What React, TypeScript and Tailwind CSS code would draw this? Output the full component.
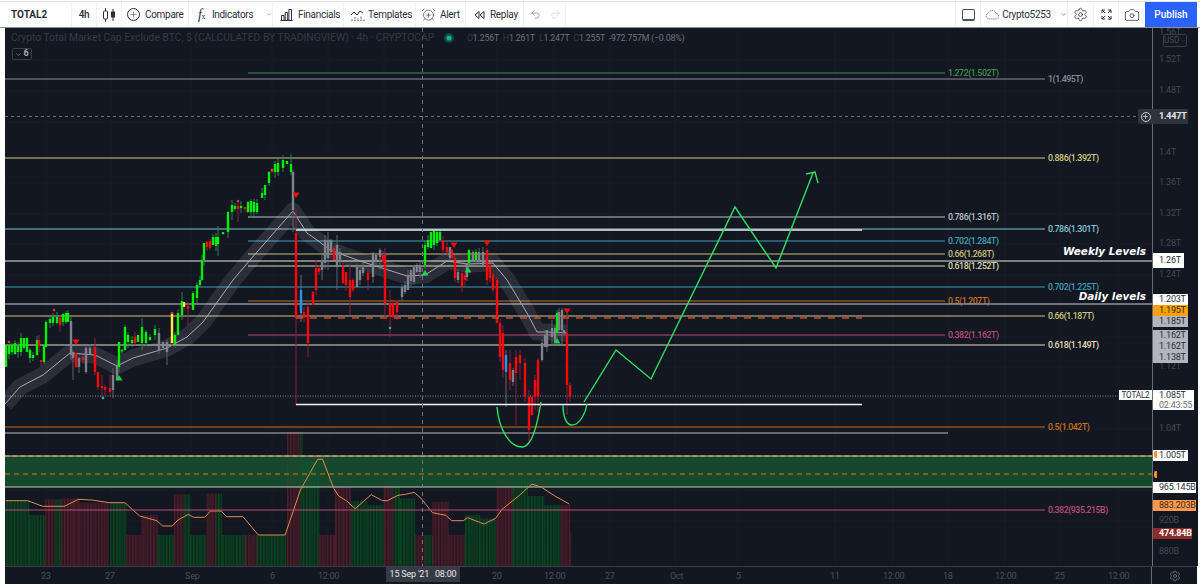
import { AlarmClockPlus, Camera, ChevronDown, Plus, Redo2, Settings, Undo2 } from "lucide-react";

type C = [number, number, number, string, number?, number?];
const candles: C[] = [
  [6,345,367,"g"],[9,345,354,"g"],[12,345,352,"g"],[15,343,354,"g"],[18,346,352,"g"],[21,338,352,"g"],[24,338,348,"g"],[27,338,352,"g"],[30,350,358,"g"],[33,355,358,"g"],[37,340,355,"g"],[39,340,346,"r"],[41,360,362,"r"],[44,345,362,"g"],[46,322,347,"g"],[50,319,323,"g"],[53,317,323,"g"],[57,317,323,"g"],[60,318,325,"r",316,332],[63,314,322,"g"],[66,313,322,"g"],[68,313,322,"g"],
  [71,321,355,"w"],[73,352,358,"w",350,380],[76,353,367,"r"],[79,358,367,"w"],[83,357,360,"r"],[86,348,372,"w"],[90,348,355,"w"],[95,347,372,"r",338,375],[98,372,387,"r"],[102,386,388,"r",375,398],[105,387,390,"r"],[110,388,392,"r",375,396],[113,375,390,"w",368,398],[117,365,380,"w"],[119,342,367,"g"],[122,350,351,"g"],[125,327,350,"g"],[128,335,342,"g"],[132,340,343,"g"],[135,337,343,"r"],[138,335,342,"g"],[142,327,343,"g",318,350],[146,332,343,"g"],[150,337,340,"g"],[155,329,335,"g",325,340],[159,333,350,"w"],[163,342,348,"w"],[167,342,352,"w",340,365],[172,313,343,"y",312,346],[175,335,345,"g"],[178,313,335,"g"],[182,301,315,"g",292,320],[184,302,307,"y"],[188,306,309,"r",302,325],[193,293,310,"g"],[197,285,298,"g"],[200,280,285,"g"],
  [202,260,280,"g"],[204,243,260,"g"],[207,242,247,"r"],[210,241,248,"r"],[213,237,245,"g"],[216,237,246,"g"],[218,237,244,"g",226,256],[223,232,234,"g"],[228,212,232,"g"],[232,205,212,"g",200,220],[235,206,209,"g"],[238,206,209,"r",202,222],[241,206,208,"g"],[245,207,209,"r"],[248,202,212,"g"],[251,201,212,"g"],[254,202,212,"g"],[257,203,212,"g"],[262,193,198,"g"],[265,185,195,"g"],[269,172,183,"g"],[272,170,172,"r"],[275,164,172,"g"],[278,163,172,"g"],[283,160,168,"g",155,172],[287,161,164,"g"],[291,164,172,"g",154,175],[293,172,210,"w",170,232],
  [296,233,318,"r",210,405],[301,290,313,"b",275,322],[304,312,318,"r"],[308,307,343,"r",300,357],[313,292,305,"r"],[316,268,290,"r",260,295],[319,268,272,"r"],[322,262,270,"w",255,280],[325,240,263,"w"],[328,240,258,"w",232,270],[331,240,252,"w"],[334,248,260,"r"],[337,245,267,"w",235,290],[340,252,262,"w"],[343,267,283,"r"],[346,272,285,"r"],[350,280,297,"r",265,315],[353,280,290,"r"],[357,267,287,"w"],[360,270,280,"w"],[363,267,273,"w"],[368,273,280,"r",268,290],[373,253,277,"w"],[376,255,262,"w"],[380,250,257,"w",248,270],[383,255,262,"r"],[385,255,303,"r",248,318],[390,303,317,"r",290,337],[393,303,317,"r"],[397,302,312,"r",300,320],[402,287,297,"w"],[405,285,292,"w"],[408,275,290,"w"],[411,270,281,"w"],[414,267,282,"w"],[417,265,272,"w"],[420,265,272,"w"],[425,245,265,"g"],[428,240,247,"g"],[431,232,248,"g"],[434,231,245,"g"],[437,232,243,"g"],[440,232,240,"g"],[443,240,250,"r"],[447,247,252,"r"],[450,247,258,"w"],[452,250,258,"r"],[455,258,278,"r",255,282],[458,272,280,"w"],[462,273,287,"r",270,292],[465,275,280,"r"],[467,263,277,"w"],[469,250,263,"g"],[473,252,262,"w"],[476,252,260,"g"],[479,252,262,"w"],[483,252,265,"w"],[487,250,280,"r",248,285],[490,265,278,"r"],[493,275,290,"r"],[497,280,323,"r"],[500,323,357,"r"],[503,333,370,"r",325,378],[506,355,372,"b",350,407],[510,363,380,"r",350,390],[513,370,382,"w"],[516,357,373,"r",350,425],[520,355,363,"r",350,380],[525,363,397,"r"],[529,397,430,"r",390,443],[532,397,415,"r"],[535,380,397,"r",375,410],[538,360,397,"r",358,412],[542,343,360,"w"],[545,335,347,"w"],[547,330,347,"w"],[552,328,337,"w",320,345],[555,328,342,"w"],[557,313,333,"g"],[559,312,330,"w",308,335],[562,310,330,"w",308,345],[564,330,333,"w"],[567,333,385,"r",310,415],[570,385,397,"r",382,402],
];
const candleColor: Record<string, [string, string]> = {
  g: ["#00f000", "#2f7d57"],
  r: ["#f80808", "#8c1d40"],
  w: ["#7f828c", "#5f626c"],
  b: ["#2196f3", "#686b75"],
  y: ["#ffeb3b", "#8c1d40"],
};

const volumes: [number, number, number, string][] = [
  [15,75,212,"g"],[75,118,255,"g"],[118,160,208,"m"],[160,190,205,"r"],[190,205,205,"m"],[205,285,218,"r"],[288,330,218,"g"],[330,370,315,"r"],[370,412,255,"r"],[412,455,315,"g"],[455,497,193,"m"],[497,540,315,"g"],[540,580,190,"m"],[580,640,315,"g"],[640,672,315,"r"],[672,748,315,"g"],[750,785,5,"r"],[785,792,5,"g"],[792,833,95,"g"],[833,875,315,"r"],[875,918,170,"r"],[918,960,213,"g"],[960,1003,225,"g"],[1003,1045,162,"m"],[1045,1085,205,"g"],[1085,1130,315,"m"],[1130,1172,215,"r"],[1172,1215,315,"r"],[1215,1255,255,"g"],[1255,1298,265,"g"],[1298,1340,155,"r"],[1340,1380,155,"g"],[1380,1422,198,"g"],[1422,1465,225,"g"],[1465,1487,225,"r"],[1487,1492,310,"r"],
];
const orangeZ = [[15,212],[72,212],[112,229],[168,229],[205,208],[240,210],[285,218],[326,218],[365,258],[410,272],[425,288],[450,288],[465,270],[492,253],[505,262],[535,262],[550,243],[578,243],[592,260],[635,260],[675,315],[745,315],[785,180],[830,88],[843,88],[872,175],[885,198],[905,212],[928,236],[970,194],[1000,212],[1012,212],[1040,196],[1060,193],[1082,187],[1100,205],[1130,248],[1165,256],[1180,272],[1210,272],[1222,263],[1265,282],[1295,265],[1312,238],[1355,198],[1390,162],[1415,172],[1450,198],[1487,222]];
const orangePts = orangeZ.map(([x, y]) => `${(x / 2.613).toFixed(1)},${(430 + y / 3).toFixed(1)}`).join(" ");
const ma = "5,404 20,387 43,375 70,353 95,355 117,366 133,358 167,348 187,337 203,322 233,280 250,260 293,211 307,233 317,240 330,250 360,261 407,276 425,275 447,261 467,264 493,263 507,280 527,313 537,332 547,332 567,333";

const fibs: [number, number, number, string, string][] = [
  [73,248,945,"#3f8f50","1.272(1.502T)"],
  [79,5,1045,"#8a8d96","1(1.495T)"],
  [158,5,1045,"#d3cb7d","0.886(1.392T)"],
  [217,248,945,"#b8c4c8","0.786(1.316T)"],
  [229,5,1045,"#83c5d0","0.786(1.301T)"],
  [241,248,945,"#3da3b5","0.702(1.284T)"],
  [254,248,945,"#c8c07a","0.66(1.268T)"],
  [266,248,945,"#dcd8a8","0.618(1.252T)"],
  [287,5,1045,"#3a9fb0","0.702(1.225T)"],
  [301,248,945,"#c8701a","0.5(1.207T)"],
  [316,5,1045,"#cfc77a","0.66(1.187T)"],
  [335,248,945,"#b84d78","0.382(1.162T)"],
  [345,5,1045,"#e2dfb8","0.618(1.149T)"],
  [427,5,1045,"#c8701a","0.5(1.042T)"],
  [510,5,1045,"#b84d78","0.382(935.215B)"],
];
const gridY = [60, 91, 122, 152, 183, 214, 244, 275, 306, 337, 367, 398, 429, 460, 490, 521, 552];
const gridX = [46, 111, 191, 272, 328, 384, 497, 554, 610, 675, 738, 835, 893, 948, 1005, 1060, 1118];

function Chart() {
  return (
    <svg viewBox="5 28 1147 538" className="block h-[538px] w-[1147px]">
      {gridY.map((y) => <line key={y} x1={5} x2={1152} y1={y} y2={y} stroke="#181c28" />)}
      {gridX.map((x) => <line key={x} x1={x} x2={x} y1={28} y2={566} stroke="#181c28" />)}
      {volumes.flatMap(([a, b, t, c], k) => {
        const x0 = a / 2.613, x1 = b / 2.613, top = 430 + t / 3;
        const out = [];
        let i = 0;
        for (let x = x0; x < x1; x += 1.4, i++) {
          const col = c === "g" ? "#084a1f" : c === "r" ? "#521d29" : (Math.floor(i / 7) % 2 ? "#084a1f" : "#521d29");
          out.push(<rect key={`${k}-${i}`} x={x} y={top} width={i % 2 ? 0.7 : 1.1} height={566 - top} fill={col} />);
        }
        return out;
      })}
      <rect x={5} y={456} width={1147} height={31} fill="#155230" opacity={0.84} />
      <line x1={5} x2={1152} y1={456} y2={456} stroke="#d8d8d0" />
      <line x1={5} x2={1152} y1={456} y2={456} stroke="#f09a30" strokeDasharray="4 4" />
      <line x1={5} x2={1152} y1={474} y2={474} stroke="#d9780f" strokeDasharray="5 4" />
      <line x1={5} x2={1152} y1={487} y2={487} stroke="#c4cec4" strokeWidth={1.2} />
      <polyline points={orangePts} fill="none" stroke="#e08a50" strokeWidth={1} />
      {fibs.map(([y, a, b, col, t]) => (
        <g key={t}>
          <line x1={a} x2={b} y1={y} y2={y} stroke={col} strokeWidth={1} />
          <text x={b + 3} y={y + 3.3} fill={col} fontSize={8.8} fontWeight={500} letterSpacing={-0.45} fontFamily="Roboto, sans-serif">{t}</text>
        </g>
      ))}
      <line x1={5} x2={1137} y1={116.5} y2={116.5} stroke="#6f727c" strokeDasharray="3 3" />
      <line x1={5} x2={1152} y1={261} y2={261} stroke="#e8e8e8" />
      <line x1={5} x2={1152} y1={304} y2={304} stroke="#8f929a" strokeWidth={1.6} />
      <line x1={5} x2={948} y1={433} y2={433} stroke="#b9bbc0" />
      <line x1={5} x2={1118} y1={396} y2={396} stroke="#8a8d95" strokeDasharray="1 1.5" />
      <polyline points={ma} fill="none" stroke="#ffffff" strokeOpacity={0.1} strokeWidth={17} strokeLinejoin="round" />
      <polyline points={ma} fill="none" stroke="#a8aab2" strokeWidth={1} />
      {candles.map(([x, t, b, c, wt, wb], i) => {
        const [body, wick] = candleColor[c];
        const up = wt ?? t - ((i * 7) % 6);
        const dn = wb ?? b + ((i * 5) % 7);
        return (
          <g key={i}>
            <line x1={x} x2={x} y1={up} y2={dn} stroke={wick} strokeWidth={1} />
            <rect x={x - 1.2} y={t} width={2.4} height={Math.max(b - t, 1.5)} fill={body} />
          </g>
        );
      })}
      <line x1={296} x2={862} y1={230} y2={230} stroke="#e6e8ea" strokeWidth={1.6} />
      <line x1={296} x2={862} y1={318} y2={318} stroke="#d0453a" strokeWidth={1.4} strokeDasharray="7 7" />
      <line x1={296} x2={862} y1={404.5} y2={404.5} stroke="#f2f2f2" strokeWidth={1.6} />
      {[[76,342],[296,195],[454,245],[487,243],[567,311]].map(([x, y]) => (
        <polygon key={x} points={`${x - 3.5},${y - 2.5} ${x + 3.5},${y - 2.5} ${x},${y + 3}`} fill="#f00f0f" />
      ))}
      {[[119,378],[425,273],[468,270],[557,341]].map(([x, y]) => (
        <polygon key={x} points={`${x - 3.5},${y + 2.5} ${x + 3.5},${y + 2.5} ${x},${y - 3}`} fill="#19d34a" />
      ))}
      {[[9,342],[54,310],[172,313],[238,201],[272,170]].map(([x, y]) => <circle key={x} cx={x} cy={y} r={1.3} fill="#d8344d" />)}
      {[[103,398],[390,328]].map(([x, y]) => <circle key={x} cx={x} cy={y} r={1.3} fill="#19c37d" />)}
      <g fill="none" stroke="#2fe05f" strokeWidth={1.4}>
        <path d="M497 407 C499 430 510 447 522 447 C533 447 538 420 541 402" />
        <path d="M563 405 C563 418 567 425 572 425 C580 425 586 412 587 404" />
        <polyline points="584,402 616,350 651,379 735,207 776,268 813,173" />
        <polyline points="806,174 815,172 818,183" />
      </g>
      <line x1={422.5} x2={422.5} y1={28} y2={566} stroke="#6f727c" strokeDasharray="4 4" />
      <text x={11} y={41} fill="#363a45" fontSize={10.3} fontFamily="Roboto, sans-serif">Crypto Total Market Cap Exclude BTC, $ (CALCULATED BY TRADINGVIEW) · 4h · CRYPTOCAP</text>
      <circle cx={449} cy={38} r={5} fill="#0f4a44" />
      <circle cx={449} cy={38} r={2.6} fill="#22ab94" />
      <text x={467} y={41} fontSize={8.8} letterSpacing={-0.2} fontFamily="Roboto, sans-serif" fill="#70737d">
        <tspan fill="#363a45">O</tspan>1.256T <tspan fill="#363a45" dx={2}>H</tspan>1.261T <tspan fill="#363a45" dx={2}>L</tspan>1.247T <tspan fill="#363a45" dx={2}>C</tspan>1.255T <tspan dx={2}>-972.757M (−0.08%)</tspan>
      </text>
      <text x={1146} y={255} textAnchor="end" fill="#ffffff" fontSize={10.4} fontWeight={700} fontStyle="italic" fontFamily="'DejaVu Sans', sans-serif">Weekly Levels</text>
      <text x={1146} y={300} textAnchor="end" fill="#ffffff" fontSize={10.4} fontWeight={700} fontStyle="italic" fontFamily="'DejaVu Sans', sans-serif">Daily levels</text>
    </svg>
  );
}

const cell = "flex h-full items-center border-r border-[#eef0f5] shrink-0";

function Toolbar() {
  return (
    <div className="flex h-[27px] items-center border-t border-t-[#e3e3e3] border-b border-b-[#8f9196] pl-[4px] pr-[3px] text-[10px] tracking-[-0.3px] text-[#2a2e39]">
      <div className={`${cell} w-[68px] pl-[7px] font-bold tracking-[0px]`}>TOTAL2</div>
      <div className={`${cell} w-[25px] justify-center font-medium`}>4h</div>
      <div className={`${cell} w-[25px] justify-center`}>
        <svg width="15" height="16" viewBox="0 0 15 16" fill="none" stroke="#2a2e39">
          <path d="M3.500 1v3M3.500 12v3" />
          <rect x="1.500" y="4" width="4" height="8" rx="1" />
          <path d="M11 2v3M11 10v4" />
          <rect x="9.500" y="5" width="3" height="5" fill="#2a2e39" />
        </svg>
      </div>
      <div className={`${cell} w-[67px] gap-[5px] pl-[5px]`}>
        <span className="flex h-[13px] w-[13px] items-center justify-center rounded-full border border-[#2a2e39]"><Plus size={9} strokeWidth={1.4} /></span>
        <span>Compare</span>
      </div>
      <div className={`${cell} w-[84px] gap-[5px] pl-[9px]`}>
        <span className="w-[14px] font-['Liberation_Serif',serif] text-[14px] italic leading-none">f<span className="text-[8px] not-italic">x</span></span>
        <span>Indicators</span>
        <ChevronDown size={9} className="ml-[8px] text-[#555]" />
      </div>
      <div className={`${cell} w-[71px] gap-[5px] pl-[7px]`}>
        <svg width="13" height="13" viewBox="0 0 13 13" fill="none" stroke="#2a2e39">
          <path d="M.5 12.500h12M1.500 12V7.500h2.500V12M5.200 12V4.500h2.500V12M8.900 12V1.500h2.600V12" />
        </svg>
        <span>Financials</span>
      </div>
      <div className={`${cell} w-[72px] gap-[3px] pl-[6px]`}>
        <svg width="15" height="14" viewBox="0 0 15 14" fill="none" stroke="#2a2e39">
          <path d="M1 7l3-3 3 3 3-4 3 2" />
          <path d="M2 13v-2M5 13V9M8 13v-3M11 13V8M14 13v-2" strokeDasharray="1 .6" />
        </svg>
        <span>Templates</span>
      </div>
      <div className={`${cell} w-[50px] gap-[4px] pl-[5px]`}>
        <AlarmClockPlus size={15} strokeWidth={1} />
        <span>Alert</span>
      </div>
      <div className={`${cell} w-[58px] gap-[5px] pl-[8px]`}>
        <svg width="11" height="10" viewBox="0 0 11 10" fill="none" stroke="#2a2e39">
          <path d="M5 1.500L1 5l4 3.500zM10 1.500L6 5l4 3.500z" />
        </svg>
        <span>Replay</span>
      </div>
      <div className={`${cell} w-[42px] gap-[9px] pl-[6px]`}>
        <Undo2 size={11} strokeWidth={1.3} className="text-[#6a6d78]" />
        <Redo2 size={11} strokeWidth={1.3} className="text-[#c8cad0]" />
      </div>
      <div className="flex-1" />
      <div className="flex h-full w-[26px] shrink-0 items-center justify-center border-x border-[#eef0f5]">
        <span className="h-[12px] w-[13px] rounded-[2px] border border-[#4a4e59] border-b-2" />
      </div>
      <div className={`${cell} w-[87px] gap-[3px] pl-[4px]`}>
        <svg width="18" height="12" viewBox="0 0 18 12" fill="none" stroke="#50535e" strokeDasharray="1.500 1">
          <path d="M4.500 11h9a3.500 3.500 0 0 0 .5-7 5 5 0 0 0-9.500-.5A3.800 3.800 0 0 0 4.500 11z" />
        </svg>
        <span>Crypto5253</span>
        <ChevronDown size={9} className="ml-[6px] text-[#555]" />
      </div>
      <div className={`${cell} w-[26px] justify-center`}><Settings size={15} strokeWidth={1.2} /></div>
      <div className={`${cell} w-[25px] justify-center`}>
        <svg width="11" height="11" viewBox="0 0 11 11" fill="none" stroke="#2a2e39">
          <path d="M4 1H1v3M1 1l3 3M7 1h3v3M10 1L7 4M4 10H1V7M1 10l3-3M7 10h3V7M10 10L7 7" />
        </svg>
      </div>
      <div className="flex h-full w-[26px] shrink-0 items-center justify-center"><Camera size={16} strokeWidth={1.1} /></div>
      <div className="flex h-full w-[52px] shrink-0 items-center justify-center bg-[#2962ff] text-[10px] font-medium tracking-[0px] text-white">Publish</div>
    </div>
  );
}

const tag = "absolute left-0 flex items-center pl-[6px] text-[9px] leading-none tracking-[-0.2px]";
const dim = "absolute left-[6px] text-[9px] leading-none tracking-[-0.2px] text-[#444852]";
const tick = "absolute top-[5px] text-[9px] leading-none tracking-[-0.2px] text-[#4a4e59]";

function PriceAxis() {
  return (
    <div className="relative h-[538px] w-[46px] shrink-0 border-l border-[#6a6d78] bg-[#131722]">
      <span className={`${dim} top-[0px]`}>1.56T</span>
      <span className="absolute left-[10px] top-[6px] flex h-[13px] w-[24px] items-center justify-center gap-[1px] rounded-[2px] border border-[#3a3e49] text-[8.4px] tracking-[-0.2px] text-[#444852]">USD<ChevronDown size={6} /></span>
      <span className={`${dim} top-[27px]`}>1.52T</span>
      <span className={`${dim} top-[58px]`}>1.48T</span>
      <span className={`${dim} top-[120px]`}>1.4T</span>
      <span className={`${dim} top-[150px]`}>1.36T</span>
      <span className={`${dim} top-[181px]`}>1.32T</span>
      <span className={`${dim} top-[211px]`}>1.28T</span>
      <span className={`${dim} top-[242px]`}>1.24T</span>
      <span className={`${dim} top-[334px]`}>1.12T</span>
      <span className={`${dim} top-[396px]`}>1.04T</span>
      <span className={`${dim} top-[488px]`}>920B</span>
      <span className={`${dim} top-[519px]`}>880B</span>
      <span className={`${tag} top-[81px] h-[15px] w-[35px] bg-[#2f333e] font-bold text-[#e8e9ec]`}>1.447T</span>
      <span className={`${tag} top-[225px] h-[15px] w-[31px] bg-white text-[#2a2e39]`}>1.26T</span>
      <span className={`${tag} top-[266px] h-[11px] w-[35px] bg-white text-[#2a2e39]`}>1.203T</span>
      <span className={`${tag} top-[277px] h-[11px] w-[35px] bg-[#f7a10e] text-[#3a2c10]`}>1.195T</span>
      <span className={`${tag} top-[288px] h-[11px] w-[35px] bg-[#b2b5be] text-[#2a2e39]`}>1.185T</span>
      <span className={`${tag} top-[302px] h-[11px] w-[35px] bg-[#b2b5be] text-[#2a2e39]`}>1.162T</span>
      <span className={`${tag} top-[313px] h-[11px] w-[35px] bg-[#b2b5be] text-[#2a2e39]`}>1.162T</span>
      <span className={`${tag} top-[324px] h-[11px] w-[35px] bg-[#b2b5be] text-[#2a2e39]`}>1.138T</span>
      <span className="absolute left-0 top-[362px] flex h-[20px] w-[41px] flex-col justify-center gap-[1px] bg-white pl-[6px] text-[9px] leading-[9px] tracking-[-0.2px]">
        <span className="text-[#2a2e39]">1.085T</span>
        <span className="text-[#6a6d78]">02:43:55</span>
      </span>
      <span className={`${tag} top-[422px] h-[11px] w-[35px] bg-white text-[#2a2e39]`}>1.005T</span>
      <span className="absolute left-[1px] top-[423px] h-[7px] w-[3px] rounded-l-[2px] bg-[#f7931a]" />
      <span className="absolute left-[1px] top-[443px] h-[7px] w-[3px] rounded-l-[2px] bg-[#f7931a]" />
      <span className={`${tag} top-[454px] h-[11px] w-[43px] bg-white text-[#2a2e39]`}>965.145B</span>
      <span className={`${tag} top-[472px] h-[11px] w-[43px] bg-[#ff9850] text-[#3a2c10]`}>883.203B</span>
      <span className={`${tag} top-[500px] h-[11px] w-[39px] bg-[#8e2b2b] font-bold text-white`}>474.84B</span>
      <span className="absolute left-[-34px] top-[362px] flex h-[10px] w-[33px] items-center justify-center bg-white text-[8.2px] leading-none tracking-[-0.2px] text-[#2a2e39]">TOTAL2</span>
      <span className="absolute left-[-15px] top-[81px] flex h-[15px] w-[15px] items-center justify-center rounded-l-[2px] bg-[#2f333e] text-white">
        <span className="flex h-[10px] w-[10px] items-center justify-center rounded-full border border-[#c8cad0]"><Plus size={7} /></span>
      </span>
    </div>
  );
}

function TimeAxis() {
  return (
    <div className="flex h-[18px] border-t border-[#3a3e49] bg-[#131722]">
      <div className="relative h-full flex-1">
        <span className={`${tick} left-[36px]`}>23</span>
        <span className={`${tick} left-[100px]`}>27</span>
        <span className={`${tick} left-[180px]`}>Sep</span>
        <span className={`${tick} left-[265px]`}>6</span>
        <span className={`${tick} left-[313px]`}>12:00</span>
        <span className={`${tick} left-[487px]`}>20</span>
        <span className={`${tick} left-[539px]`}>12:00</span>
        <span className={`${tick} left-[600px]`}>27</span>
        <span className={`${tick} left-[665px]`}>Oct</span>
        <span className={`${tick} left-[731px]`}>5</span>
        <span className={`${tick} left-[825px]`}>11</span>
        <span className={`${tick} left-[878px]`}>12:00</span>
        <span className={`${tick} left-[938px]`}>18</span>
        <span className={`${tick} left-[990px]`}>12:00</span>
        <span className={`${tick} left-[1050px]`}>25</span>
        <span className={`${tick} left-[1103px]`}>12:00</span>
        <span className="absolute left-[381px] top-0 flex h-[15px] w-[74px] items-center justify-center gap-[6px] whitespace-nowrap bg-[#363a45] text-[9px] tracking-[-0.2px] text-[#e8e9ec]">
          <span>15 Sep '21</span><span>08:00</span>
        </span>
      </div>
      <div className="flex w-[46px] shrink-0 items-center justify-center border-l border-[#6a6d78]">
        <Settings size={12} strokeWidth={1.2} className="text-[#8f929b]" />
      </div>
    </div>
  );
}

export default function App() {
  return (
    <div className="flex h-[587px] w-[1200px] flex-col overflow-hidden bg-white pt-[1px] font-['Roboto',sans-serif]">
      <Toolbar />
      <div className="ml-[5px] mr-[3px] flex flex-col">
        <div className="flex">
          <div className="relative h-[538px] flex-1 bg-[#131722]">
            <Chart />
            <span className="absolute left-[7px] top-[20px] flex h-[12px] w-[20px] items-center justify-center gap-[1px] rounded-[2px] border border-[#3a3e49] text-[9px] font-bold text-[#a8aab2]">
              <ChevronDown size={7} />6
            </span>
          </div>
          <PriceAxis />
        </div>
        <TimeAxis />
      </div>
    </div>
  );
}
